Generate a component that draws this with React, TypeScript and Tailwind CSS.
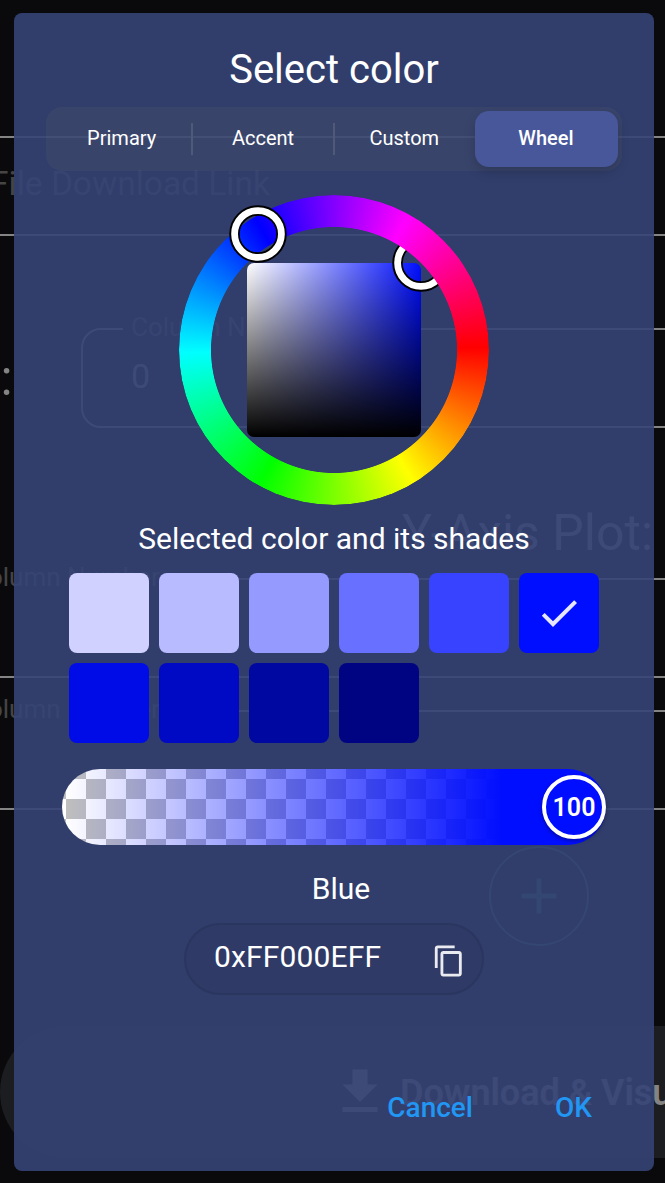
import React from "react";
import { MdAdd, MdCheck, MdContentCopy, MdFileDownload } from "react-icons/md";

const tabs = ["Primary", "Accent", "Custom", "Wheel"];

const shades = [
  "bg-[#d0d1ff]",
  "bg-[#b8bbff]",
  "bg-[#959aff]",
  "bg-[#6870ff]",
  "bg-[#3843ff]",
  "bg-[#000eff]",
  "bg-[#000ce8]",
  "bg-[#0009c4]",
  "bg-[#0008a2]",
  "bg-[#000482]",
];

function Field({ className, label, labelClass, value }: { className: string; label?: string; labelClass?: string; value?: string }) {
  return (
    <fieldset className={`h-[100px] shrink-0 rounded-[20px] border-2 border-[#848484] ${className}`}>
      {value && <div className="pt-[24px] pl-[48px] text-[34px] leading-[44px] text-[#848484]">{value}</div>}
      {label && <div className={`whitespace-nowrap text-[#454546] ${labelClass}`}>{label}</div>}
    </fieldset>
  );
}

function NotchedLabel({ className }: { className: string }) {
  return <span className={`absolute bg-[#0a0a0c] px-[8px] text-[26px] leading-[30px] whitespace-nowrap text-[#454546] ${className}`}>Column Number</span>;
}

function PlotForm() {
  return (
    <div className="flex h-full flex-col pt-[136px]">
      <Field className="-ml-[60px] w-[800px]" label="File Download Link" labelClass="pl-[48px] pt-[24px] text-[33.5px] leading-[44px]" />
      <div className="mt-[92px] flex h-[100px] shrink-0">
        <div className="flex w-[81px] shrink-0 items-center justify-end pr-[68.5px] text-[50px] whitespace-nowrap text-[#848484]">X-Axis Plot:</div>
        <div className="relative">
          <Field className="w-[700px]" value="0" />
          <NotchedLabel className="-top-[16px] left-[42px]" />
        </div>
      </div>
      <div className="flex h-[150px] shrink-0 items-end justify-end pr-[12px] pb-[16px] text-[50px] leading-[58px] text-[#848484]">Y-Axis Plot:</div>
      <div className="relative">
        <Field className="-ml-[60px] w-[800px]" />
        <NotchedLabel className="-top-[16px] -left-[37px]" />
      </div>
      <div className="relative mt-[32px]">
        <Field className="-ml-[60px] w-[800px]" />
        <NotchedLabel className="-top-[16px] -left-[37px]" />
      </div>
      <div className="mt-[36px] ml-[489px] flex size-[100px] shrink-0 items-center justify-center rounded-full border-2 border-[#2f5a50] text-[#2f5a50]">
        <MdAdd className="size-[60px]" />
      </div>
      <div className="mt-[80px] flex h-[132px] w-[800px] shrink-0 items-center rounded-full bg-[#1c1d20] pl-[330px] text-[36px] font-semibold whitespace-nowrap text-[#848484]">
        <MdFileDownload className="mr-[10px] size-[60px] shrink-0" />
        <span className="pt-[2px]">Download &amp; Visualize</span>
      </div>
    </div>
  );
}

function Thumb({ className }: { className: string }) {
  return (
    <svg viewBox="0 0 58 58" className={`absolute size-[58px] ${className}`} fill="none">
      <circle cx="29" cy="29" r="23.5" stroke="#000" strokeWidth="10.5" />
      <circle cx="29" cy="29" r="23.4" stroke="#fff" strokeWidth="6.8" />
    </svg>
  );
}

function ColorWheel() {
  return (
    <div className="relative mt-[24px] flex size-[310px] shrink-0 items-center justify-center">
      <div className="size-[174px] rounded-[7px] bg-[linear-gradient(to_bottom,transparent,#000),linear-gradient(to_right,#fff,#000eff)]" />
      <Thumb className="top-[39px] left-[213px]" />
      <div className="absolute inset-0 rounded-full bg-[conic-gradient(from_89deg,#f00,#ff0,#0f0,#0ff,#00f,#f0f,#f00)] [mask-image:radial-gradient(circle,transparent_122.6px,#000_123.4px)]" />
      <Thumb className="top-[9.5px] left-[50px]" />
    </div>
  );
}

function OpacitySlider() {
  return (
    <div className="mt-[26px] flex h-[76px] w-[544px] shrink-0 items-center justify-end rounded-full bg-[linear-gradient(to_right,#000eff00_4px,#000eff_440px),repeating-conic-gradient(#bfbfbf_0_25%,#fff_0_50%)] bg-[size:100%_100%,40px_40px] bg-[position:0_0,4px_10px]">
      <div className="flex size-[64px] items-center justify-center rounded-full border-4 border-white bg-[#000eff] pt-[2px] text-[25px] font-semibold text-white shadow-[0_2px_4px_rgba(0,0,0,0.35)]">
        100
      </div>
    </div>
  );
}

export default function App() {
  return (
    <div className="relative h-[1183px] w-[665px] overflow-hidden bg-[#0a0a0c] font-['Roboto',sans-serif]">
      <PlotForm />
      <div className="absolute inset-0 pt-[13px] pl-[14px]">
        <div className="flex h-[1158px] w-[640px] flex-col items-center rounded-[8px] bg-[#354476]/90 text-white">
          <h1 className="mt-[33px] h-[48px] text-[40px] leading-[48px]">Select color</h1>
          <div className="mt-[13px] flex h-[64px] w-[576px] shrink-0 items-center rounded-[16px] bg-[#808070]/10 py-[4px] pr-[4px] pl-[5px]">
            {tabs.map((tab, i) => (
              <React.Fragment key={tab}>
                {(i === 1 || i === 2) && <div className="-mx-px h-[32px] w-[2px] bg-[#505a78]" />}
                <div
                  className={
                    tab === "Wheel"
                      ? "flex h-[56px] w-[143px] items-center justify-center rounded-[14px] bg-[#47579a] pr-px pb-[2px] text-[20px] font-medium shadow-[0_5px_12px_rgba(0,0,0,0.18)]"
                      : "flex h-[56px] flex-1 items-center justify-center pb-[2px] text-[20px]"
                  }
                >
                  {tab}
                </div>
              </React.Fragment>
            ))}
          </div>
          <ColorWheel />
          <h2 className="mt-[16px] h-[36px] text-[30px] leading-[36px]">Selected color and its shades</h2>
          <div className="mt-[16px] grid grid-cols-6 gap-[10px]">
            {shades.map((shade, i) => (
              <div key={shade} className={`flex size-[80px] items-center justify-center rounded-[8px] ${shade}`}>
                {i === 5 && <MdCheck className="size-[48px] text-white/90" />}
              </div>
            ))}
          </div>
          <OpacitySlider />
          <div className="mt-[26px] h-[36px] pl-[14px] text-[30px] leading-[36px]">Blue</div>
          <div className="mt-[16px] flex h-[72px] w-[300px] shrink-0 items-center justify-between rounded-full border-2 border-[#2b365f] bg-[#2f3a66] pr-[16px] pl-[28px] text-[30px]">
            <span className="pb-[5px] tracking-[0.15px]">0xFF000EFF</span>
            <MdContentCopy className="mt-[4px] size-[34px] text-white/90" />
          </div>
          <div className="mt-[95px] flex w-full justify-end gap-[82px] pr-[62px] text-[28px] leading-[36px] font-medium text-[#2196f3]">
            <button>Cancel</button>
            <button>OK</button>
          </div>
        </div>
      </div>
    </div>
  );
}
